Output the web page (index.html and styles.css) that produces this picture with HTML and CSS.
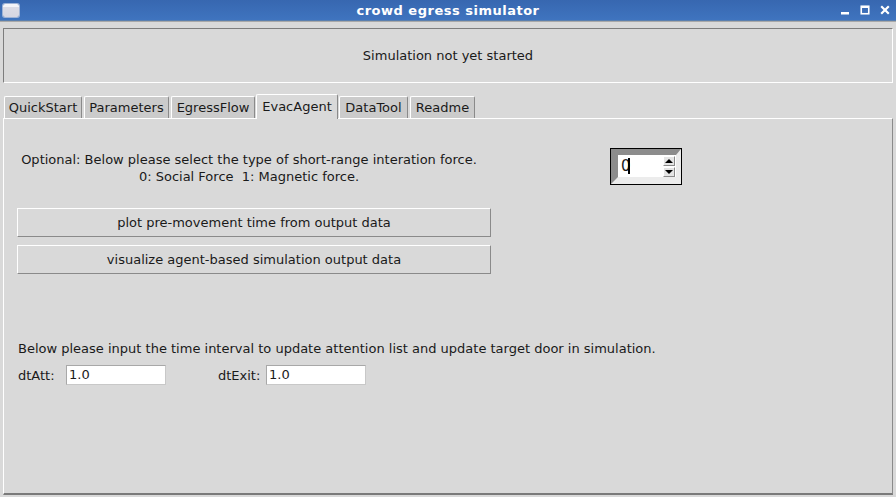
FILE: index.html
```html
<!DOCTYPE html>
<html>
<head>
<meta charset="utf-8">
<link rel="stylesheet" href="styles.css">
</head>
<body>
<div class="window">
  <div class="titlebar">
    <div class="left"><div class="app-icon"></div></div>
    <div class="title">crowd egress simulator</div>
    <div class="wm-buttons">
      <svg width="10" height="10" viewBox="0 0 10 10"><rect x="1" y="7" width="8" height="2.5" fill="#fff"/></svg>
      <svg width="10" height="10" viewBox="0 0 10 10"><rect x="1.25" y="1.25" width="7.5" height="7.5" fill="none" stroke="#fff" stroke-width="1.6"/><rect x="1" y="1" width="8" height="2" fill="#fff"/></svg>
      <svg width="10" height="10" viewBox="0 0 10 10"><path d="M1.2 1.2 L8.8 8.8 M8.8 1.2 L1.2 8.8" stroke="#fff" stroke-width="2.2"/></svg>
    </div>
  </div>
  <div class="body">
    <div class="status">Simulation not yet started</div>
    <div class="tabs">
      <div class="tab t1">QuickStart</div>
      <div class="tab t2">Parameters</div>
      <div class="tab t3">EgressFlow</div>
      <div class="tab t4 active">EvacAgent</div>
      <div class="tab t5">DataTool</div>
      <div class="tab t6">Readme</div>
    </div>
    <div class="panel">
      <div class="row-top">
        <div class="info">Optional: Below please select the type of short-range interation force.<br>0: Social Force&nbsp; 1: Magnetic force.</div>
        <div class="spin-outer">
          <div class="spin-bevel">
            <div class="spin-entry">
              <span class="spin-val">0</span>
              <div class="spin-arrows">
                <div class="arrow up"></div>
                <div class="arrow down"></div>
              </div>
            </div>
          </div>
        </div>
      </div>
      <div class="btn first">plot pre-movement time from output data</div>
      <div class="btn second">visualize agent-based simulation output data</div>
      <div class="hint">Below please input the time interval to update attention list and update target door in simulation.</div>
      <div class="fields">
        <span class="flabel">dtAtt:</span><div class="entry">1.0</div>
        <span class="flabel exit">dtExit:</span><div class="entry">1.0</div>
      </div>
    </div>
  </div>
</div>
</body>
</html>
```
FILE: styles.css
```css
html, body {
  margin: 0;
  padding: 0;
  background: #d9d9d9;
}
.window {
  width: 896px;
  height: 497px;
  overflow: hidden;
  font-family: "DejaVu Sans", sans-serif;
  font-size: 12px;
  color: #1a1a1a;
}
.titlebar {
  height: 20px;
  background: linear-gradient(#3767b0, #3f74bf);
  border-bottom: 1px solid #5a7fae;
  display: grid;
  grid-template-columns: 1fr auto 1fr;
  align-items: center;
}
.left {
  display: flex;
  align-items: center;
}
.app-icon {
  margin-left: 3px;
  width: 16px;
  height: 13px;
  border-radius: 2px;
  background: linear-gradient(#f4f4f8 0, #f4f4f8 3px, #dcdce6 3px, #d6d6e2);
  box-shadow: 0 0 0 1px #9fb3d6;
}
.title {
  text-align: center;
  color: #fff;
  font-weight: bold;
  font-size: 13px;
  letter-spacing: 0.5px;
}
.wm-buttons {
  display: flex;
  justify-content: flex-end;
  gap: 10px;
  margin-right: 6px;
}
.body {
  border-top: 1px solid #a9a9a9;
  background: #d9d9d9;
  padding: 6px 3px 0 3px;
}
.status {
  height: 53px;
  border-top: 1px solid #7d7d7d;
  border-left: 1px solid #7d7d7d;
  border-right: 1px solid #ffffff;
  border-bottom: 1px solid #ffffff;
  display: flex;
  align-items: center;
  justify-content: center;
  font-size: 13px;
}
.tabs {
  margin-top: 11px;
  display: flex;
  align-items: flex-end;
  height: 24px;
  padding-left: 1px;
  gap: 2px;
}
.tab {
  box-sizing: border-box;
  height: 22px;
  line-height: 21px;
  text-align: center;
  background: #cbcbcb;
  border-top: 1px solid #ffffff;
  border-left: 1px solid #ffffff;
  border-right: 1px solid #8a8a8a;
  border-radius: 2px 2px 0 0;
  font-size: 13px;
}
.t1 { width: 78px; }
.t2 { width: 85px; }
.t3 { width: 84px; }
.t4 { width: 82px; }
.t5 { width: 69px; }
.t6 { width: 65px; }
.tab.active {
  background: #d9d9d9;
  height: 25px;
  line-height: 23px;
  margin: 0 -1px;
  position: relative;
  z-index: 1;
  margin-bottom: -1px;
}
.panel {
  height: 374px;
  border-top: 1px solid #ffffff;
  border-left: 1px solid #ffffff;
  border-right: 1px solid #8a8a8a;
  border-bottom: 2px solid #7a7a7a;
  padding: 0 0 0 13px;
  font-size: 13px;
}
.row-top {
  display: flex;
  align-items: flex-start;
  padding-top: 29px;
}
.info {
  width: 460px;
  margin-left: 2px;
  text-align: center;
  line-height: 17px;
  margin-top: 3px;
}
.spin-outer {
  margin-left: 131px;
  width: 70px;
  height: 35px;
  border: 1px solid #000;
}
.spin-bevel {
  height: 22px;
  border-style: solid;
  border-width: 6px 5px 7px 7px;
  border-color: #8c8c8c #ececec #ececec #8c8c8c;
}
.spin-entry {
  height: 22px;
  background: #fff;
  display: flex;
  align-items: center;
}
.spin-val {
  flex: 1;
  padding-left: 3px;
  font-size: 15px;
}
.spin-val::after {
  content: "";
  display: inline-block;
  width: 2px;
  height: 16px;
  background: #000;
  vertical-align: -3px;
  margin-left: -3px;
}
.spin-arrows {
  width: 12px;
  display: flex;
  flex-direction: column;
  gap: 1px;
  margin-right: 1px;
}
.arrow {
  height: 10px;
  background: #e4e4e4;
  border: 1px solid #ffffff;
  border-right-color: #8a8a8a;
  border-bottom-color: #8a8a8a;
  position: relative;
  box-sizing: border-box;
}
.arrow::after {
  content: "";
  position: absolute;
  left: 1px;
  border-left: 4px solid transparent;
  border-right: 4px solid transparent;
}
.arrow.up::after {
  top: 2px;
  border-bottom: 4px solid #000;
}
.arrow.down::after {
  top: 2px;
  border-top: 4px solid #000;
}
.btn {
  width: 472px;
  height: 27px;
  border-top: 1px solid #ffffff;
  border-left: 1px solid #ffffff;
  border-right: 1px solid #8a8a8a;
  border-bottom: 1px solid #8a8a8a;
  display: flex;
  align-items: center;
  justify-content: center;
}
.btn.first {
  margin-top: 23px;
}
.btn.second {
  margin-top: 8px;
}
.hint {
  margin-top: 66px;
  margin-left: 1px;
  line-height: 17px;
}
.fields {
  margin-top: 8px;
  display: flex;
  align-items: center;
  margin-left: 1px;
}
.flabel {
  width: 48px;
}
.flabel.exit {
  margin-left: 52px;
}
.entry {
  width: 96px;
  height: 18px;
  line-height: 18px;
  background: #fff;
  border: 1px solid #c8c8c8;
  border-top-color: #a8a8a8;
  border-left-color: #a8a8a8;
  padding-left: 2px;
}
```
